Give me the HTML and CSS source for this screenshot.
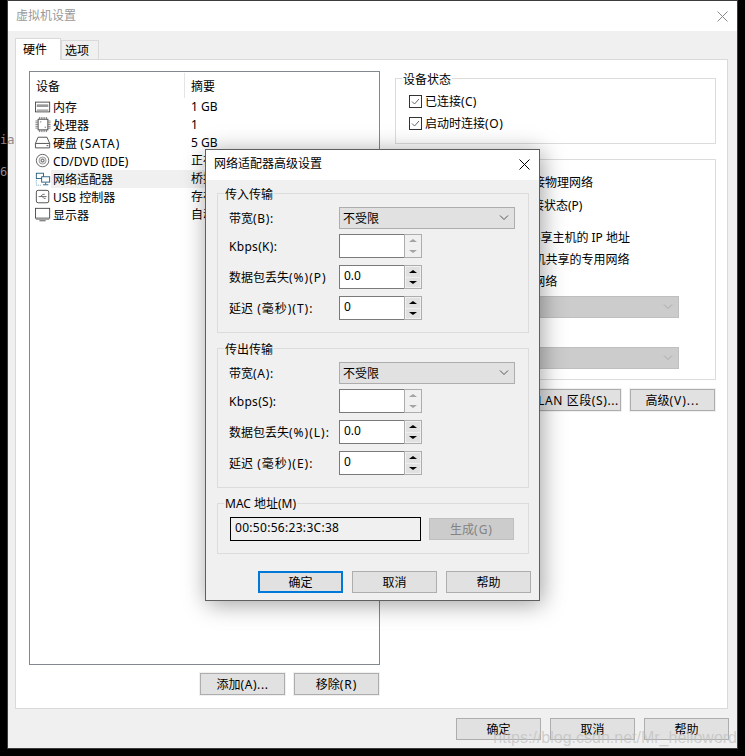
FILE: index.html
```html
<!DOCTYPE html>
<html lang="zh">
<head>
<meta charset="utf-8">
<title>虚拟机设置</title>
<link rel="stylesheet" href="styles.css">
</head>
<body>
<span class="bg-text bg-ia">ia</span>
<span class="bg-text bg-six">6</span>
<div class="window">
  <div class="titlebar">
    <span class="title-text">虚拟机设置</span>
    <svg width="11" height="11" viewBox="0 0 11 11"><path d="M.5.5l10 10M10.500.5l-10 10" stroke="#8a8a8a" fill="none"/></svg>
  </div>
  <div class="content">
    <div class="tabs">
      <div class="tab tab-active">硬件</div>
      <div class="tab">选项</div>
    </div>
    <div class="panel">
      <div class="left-col">
        <div class="list">
          <div class="list-head">
            <div class="head-a">设备</div>
            <div class="head-b">摘要</div>
          </div>
          <div class="row">
            <svg class="icon" width="18" height="18" viewBox="0 0 18 18"><rect x=".5" y="3.500" width="16" height="11" fill="#fff" stroke="#444"/><rect x="2" y="6" width="13" height="3" fill="#999"/><path d="M2 12.500h13" stroke="#666"/></svg>
            <div class="row-body"><span class="name">内存</span><span class="sum">1 GB</span></div>
          </div>
          <div class="row">
            <svg class="icon" width="18" height="18" viewBox="0 0 18 18"><rect x="3.500" y="2.500" width="11" height="12" fill="#fff" stroke="#444"/><path d="M.5 4.500h3M.5 6.500h3M.5 8.500h3M.5 10.500h3M.5 12.500h3M14 4.500h3.500M14 6.500h3.500M14 8.500h3.500M14 10.500h3.500M14 12.500h3.500M5 0v3M7 0v3M9 0v3M11 0v3M13 0v3M5 14v3M7 14v3M9 14v3M11 14v3M13 14v3" stroke="#777"/><rect x="6" y="5" width="1" height="1" fill="#222"/><rect x="11" y="11" width="1" height="1" fill="#222"/></svg>
            <div class="row-body"><span class="name">处理器</span><span class="sum">1</span></div>
          </div>
          <div class="row">
            <svg class="icon" width="18" height="18" viewBox="0 0 18 18"><path d="M3.500 2.500h10l3 7v5H.5v-5z M.5 9.500h16" fill="#fff" stroke="#444"/><path d="M13 12h2" stroke="#444"/></svg>
            <div class="row-body"><span class="name">硬盘 <span class="lat-w">(SATA)</span></span><span class="sum">5 GB</span></div>
          </div>
          <div class="row">
            <svg class="icon" width="18" height="18" viewBox="0 0 18 18"><circle cx="8.500" cy="8.500" r="7" fill="#fff" stroke="#555"/><circle cx="8.500" cy="8.500" r="4" fill="#ddd" stroke="#999"/><circle cx="8.500" cy="8.500" r="1.500" fill="#fff" stroke="#444"/></svg>
            <div class="row-body"><span class="name">CD/DVD (IDE)</span><span class="sum">正在使用文件</span></div>
          </div>
          <div class="row">
            <svg class="icon" width="18" height="18" viewBox="0 0 18 18"><rect x="1.500" y="2.500" width="8" height="6" fill="#fff" stroke="#1f5a7a"/><rect x="7.500" y="6.500" width="9" height="6" fill="#fff" stroke="#1f5a7a"/><path d="M12 13v2M9 15.500h6" stroke="#1f5a7a"/><path d="M1.500 10v6h6" stroke="#6b9ab5" stroke-dasharray="1 1" fill="none"/></svg>
            <div class="row-body row-selected"><span class="name">网络适配器</span><span class="sum">桥接模式 (自动)</span></div>
          </div>
          <div class="row">
            <svg class="icon" width="18" height="18" viewBox="0 0 18 18"><rect x="1.500" y="1.500" width="14" height="14" rx="2" fill="#fff" stroke="#444"/><path d="M4 8.500h9M6 8.500l3-2.500h2M8 8.500l2 2h2" fill="none" stroke="#666"/></svg>
            <div class="row-body"><span class="name">USB 控制器</span><span class="sum">存在</span></div>
          </div>
          <div class="row">
            <svg class="icon" width="18" height="18" viewBox="0 0 18 18"><rect x=".5" y="1.500" width="16" height="11" fill="#fff" stroke="#444"/><path d="M1 13.500h15" stroke="#999" stroke-width="2"/><path d="M5 15.500h7" stroke="#444"/></svg>
            <div class="row-body"><span class="name">显示器</span><span class="sum">自动检测</span></div>
          </div>
        </div>
        <div class="list-actions">
          <button class="btn halo" type="button">添加<span class="lat">(A)...</span></button>
          <button class="btn halo" type="button">移除<span class="lat-w">(R)</span></button>
        </div>
      </div>
      <div class="right-col">
        <div class="group group-status">
          <span class="legend legend-white">设备状态</span>
          <label class="check-row"><span class="check"><svg width="11" height="11" viewBox="0 0 11 11"><path d="M2 5.500l2.500 2.500L9 3" fill="none" stroke="#666"/></svg></span>已连接<span class="lat-s">(C)</span></label>
          <label class="check-row"><span class="check"><svg width="11" height="11" viewBox="0 0 11 11"><path d="M2 5.500l2.500 2.500L9 3" fill="none" stroke="#666"/></svg></span>启动时连接<span class="lat">(O)</span></label>
        </div>
        <div class="group group-net">
          <div class="net-row net-1">桥接模式(R): 直接连接物理网络</div>
          <div class="net-row net-2">复制物理网络连接状态(P)</div>
          <div class="net-row net-3">NAT 模式(N): 用于共享主机的 IP 地址</div>
          <div class="net-row net-4">仅主机模式(H): 与虚拟机共享的专用网络</div>
          <div class="net-row net-5">自定义(U): 特定虚拟网络</div>
          <div class="off-select off-1"><svg width="10" height="6" viewBox="0 0 10 6"><path d="M1 .5l4 4 4-4" fill="none" stroke="#a8a8a8"/></svg></div>
          <div class="off-select off-2"><svg width="10" height="6" viewBox="0 0 10 6"><path d="M1 .5l4 4 4-4" fill="none" stroke="#a8a8a8"/></svg></div>
        </div>
        <div class="net-actions">
          <button class="btn halo" type="button"><span class="lat">LAN 区段(S)...</span></button>
          <button class="btn halo" type="button">高级<span class="lat-w">(V)...</span></button>
        </div>
      </div>
    </div>
    <div class="footer">
      <button class="btn" type="button">确定</button>
      <button class="btn" type="button">取消</button>
      <button class="btn" type="button">帮助</button>
    </div>
  </div>
</div>

<div class="dialog">
  <div class="dlg-title">
    <span>网络适配器高级设置</span>
    <svg width="11" height="11" viewBox="0 0 11 11"><path d="M.5.5l10 10M10.500.5l-10 10" stroke="#000" fill="none"/></svg>
  </div>
  <div class="dlg-body">
    <div class="group dlg-group">
      <span class="legend legend-grey">传入传输</span>
      <div class="form-row form-first"><span class="form-label">带宽<span class="lat-m">(B):</span></span><div class="select"><span>不受限</span><svg width="10" height="6" viewBox="0 0 10 6"><path d="M1 .5l4 4 4-4" fill="none" stroke="#555"/></svg></div></div>
      <div class="form-row form-kbps"><span class="form-label"><span class="lat-s">Kbps(K):</span></span><div class="spin spin-off"><div class="spin-val"></div><div class="spin-btns"><div class="spin-btn"><i class="tri-up"></i></div><div class="spin-btn"><i class="tri-down"></i></div></div></div></div>
      <div class="form-row"><span class="form-label">数据包丢失<span class="lat-w">(%)(P)</span></span><div class="spin"><div class="spin-val">0.0</div><div class="spin-btns"><div class="spin-btn"><i class="tri-up"></i></div><div class="spin-btn"><i class="tri-down"></i></div></div></div></div>
      <div class="form-row"><span class="form-label">延迟<span class="lat-w"> (毫秒)(T):</span></span><div class="spin"><div class="spin-val">0</div><div class="spin-btns"><div class="spin-btn"><i class="tri-up"></i></div><div class="spin-btn"><i class="tri-down"></i></div></div></div></div>
    </div>
    <div class="group dlg-group">
      <span class="legend legend-grey">传出传输</span>
      <div class="form-row form-first"><span class="form-label">带宽<span class="lat-m">(A):</span></span><div class="select"><span>不受限</span><svg width="10" height="6" viewBox="0 0 10 6"><path d="M1 .5l4 4 4-4" fill="none" stroke="#555"/></svg></div></div>
      <div class="form-row form-kbps"><span class="form-label"><span class="lat-s">Kbps(S):</span></span><div class="spin spin-off"><div class="spin-val"></div><div class="spin-btns"><div class="spin-btn"><i class="tri-up"></i></div><div class="spin-btn"><i class="tri-down"></i></div></div></div></div>
      <div class="form-row"><span class="form-label">数据包丢失<span class="lat-w">(%)(L):</span></span><div class="spin"><div class="spin-val">0.0</div><div class="spin-btns"><div class="spin-btn"><i class="tri-up"></i></div><div class="spin-btn"><i class="tri-down"></i></div></div></div></div>
      <div class="form-row"><span class="form-label">延迟<span class="lat-w"> (毫秒)(E):</span></span><div class="spin"><div class="spin-val">0</div><div class="spin-btns"><div class="spin-btn"><i class="tri-up"></i></div><div class="spin-btn"><i class="tri-down"></i></div></div></div></div>
    </div>
    <div class="group mac-group">
      <span class="legend legend-grey legend-mac">MAC 地址(M)</span>
      <div class="mac-value">00:50:56:23:3C:38</div>
      <button class="btn btn-off" type="button">生成<span class="lat-w">(G)</span></button>
    </div>
    <div class="dlg-actions">
      <button class="btn btn-default" type="button">确定</button>
      <button class="btn" type="button">取消</button>
      <button class="btn" type="button">帮助</button>
    </div>
  </div>
</div>

<span class="watermark">https://blog.csdn.net/Mr_helloword</span>
</body>
</html>
```
FILE: styles.css
```css
* { box-sizing: border-box; }
html, body { margin: 0; padding: 0; }
body {
  position: relative;
  width: 745px;
  height: 756px;
  overflow: hidden;
  background: #000;
  color: #000;
  font: 12px/16px "Noto Sans", "Noto Sans CJK SC", sans-serif;
}
.lat-s { letter-spacing: .3px; }
.lat-m { letter-spacing: .7px; }
.lat { letter-spacing: .6px; }
.lat-w { letter-spacing: 1px; }
.bg-text { position: absolute; left: 0; color: #8a8a8a; font-family: "DejaVu Sans Mono", monospace; }
.bg-ia { top: 132px; }
.bg-six { top: 164px; }

.window {
  width: 731px;
  height: 749px;
  margin-left: 7px;
  border: 1px solid #3c3c3c;
  background: #f0f0f0;
}
.titlebar {
  height: 30px;
  background: #fff;
  display: flex;
  align-items: center;
  justify-content: space-between;
  padding: 0 9px 0 8px;
  color: #999;
}
.content { padding: 7px 9px 0 7px; }
.tabs { display: flex; align-items: flex-end; height: 21px; }
.tab {
  width: 38px;
  height: 19px;
  padding-left: 3px;
  border: 1px solid #d9d9d9;
  border-bottom: 0;
  line-height: 20px;
}
.tab-active {
  position: relative;
  z-index: 1;
  width: 46px;
  height: 22px;
  margin-bottom: -1px;
  padding-left: 7px;
  background: #fff;
  line-height: 22px;
}
.panel {
  height: 650px;
  border: 1px solid #d9d9d9;
  background: #fff;
  display: flex;
  padding: 11px 11px 0 13px;
  gap: 15px;
}
.left-col { width: 351px; }
.list {
  height: 594px;
  border: 1px solid #828790;
  background: #fff;
}
.list-head { display: flex; height: 26px; padding-top: 1px; }
.head-a {
  width: 155px;
  padding: 6px 0 0 6px;
  border-right: 1px solid #e5e5e5;
}
.head-b { padding: 6px 0 0 6px; }
.row { display: flex; height: 18px; padding-left: 5px; align-items: center; }
.icon { flex: none; width: 16px; height: 18px; overflow: visible; }
.row-body { flex: 1; display: flex; height: 18px; line-height: 18px; }
.row-selected { background: #f0f0f0; }
.name { width: 140px; padding-left: 2px; flex: none; line-height: 20px; }
.list-actions { display: flex; justify-content: flex-end; gap: 9px; margin-top: 8px; padding-right: 1px; }

.btn {
  width: 85px;
  height: 22px;
  padding: 2px 0 0;
  border: 1px solid #adadad;
  background: #e1e1e1;
  color: #000;
  font: inherit;
  flex: none;
}
.halo { box-shadow: 0 0 0 1px #f0f0f0; }

.right-col { width: 321px; padding-top: 7px; }
.group { position: relative; border: 1px solid #dcdcdc; }
.legend { position: absolute; left: 6px; top: -7px; padding: 0 1px; white-space: nowrap; }
.legend-white { background: #fff; }
.legend-grey { background: #f0f0f0; }
.legend-mac { top: -8px; }
.group-status { height: 66px; padding: 11px 0 0 13px; }
.check-row { display: flex; align-items: center; height: 22px; padding-top: 2px; }
.check {
  width: 13px;
  height: 13px;
  margin: -2px 3px 0 0;
  border: 1px solid #333;
  display: flex;
}
.group-net { height: 221px; margin-top: 15px; padding-top: 15px; }
.net-row { height: 16px; white-space: nowrap; }
.net-1 { padding-left: 32px; }
.net-2 { padding-left: 52px; margin-top: 7px; }
.net-3 { padding-left: 36px; margin-top: 16px; }
.net-4 { padding-left: 19px; margin-top: 6px; }
.net-5 { padding-left: 31px; margin-top: 6px; }
.off-select {
  height: 22px;
  margin-left: 33px;
  width: 250px;
  background: #ccc;
  border: 1px solid #bfbfbf;
  display: flex;
  align-items: center;
  justify-content: flex-end;
  padding-right: 5px;
}
.off-1 { margin-top: 6px; }
.off-2 { margin-top: 29px; }
.net-actions { display: flex; justify-content: flex-end; gap: 9px; margin-top: 9px; padding-right: 1px; }

.footer { display: flex; justify-content: flex-end; gap: 9px; margin: 9px -1px 0 0; }

.dialog {
  position: absolute;
  left: 205px;
  top: 149px;
  width: 335px;
  height: 452px;
  border: 1px solid #5f5f5f;
  background: #f0f0f0;
  box-shadow: 2px 3px 22px rgba(0, 0, 0, .38);
}
.dlg-title {
  height: 30px;
  background: #fff;
  display: flex;
  align-items: center;
  justify-content: space-between;
  padding: 0 9px 2px 8px;
}
.dlg-body { padding: 13px 10px 0 11px; }
.dlg-group { height: 140px; margin-bottom: 15px; padding: 0 0 0 11px; }
.form-row { display: flex; align-items: center; margin-top: 7px; }
.form-first { margin-top: 13px; }
.form-kbps { margin-top: 5px; }
.form-label { width: 110px; flex: none; white-space: nowrap; padding-top: 2px; }
.select {
  width: 176px;
  height: 22px;
  border: 1px solid #adadad;
  background: #e1e1e1;
  display: flex;
  align-items: center;
  justify-content: space-between;
  padding: 2px 5px 0 3px;
}
.select svg { margin-top: -2px; }
.spin { display: flex; width: 83px; height: 24px; }
.spin-val {
  flex: 1;
  background: #fff;
  border: 1px solid #7a7a7a;
  border-right: 0;
  padding: 2px 0 0 4px;
}
.spin-btns {
  width: 18px;
  border: 1px solid #adadad;
  padding: 1px;
  display: flex;
  flex-direction: column;
  gap: 1px;
}
.spin-btn { flex: 1; background: #e1e1e1; display: flex; align-items: center; justify-content: center; }
.tri-up, .tri-down { width: 0; height: 0; border-left: 4px solid transparent; border-right: 4px solid transparent; }
.tri-up { border-bottom: 3px solid #000; }
.tri-down { border-top: 3px solid #000; }
.spin-off .spin-btn { background: #f0f0f0; }
.spin-off .tri-up { border-bottom-color: #a3a3a3; }
.spin-off .tri-down { border-top-color: #a3a3a3; }

.mac-group { height: 51px; display: flex; align-items: flex-start; gap: 8px; padding: 13px 0 0 12px; }
.mac-value {
  width: 191px;
  height: 24px;
  border: 1px solid #000;
  padding: 2px 0 0 4px;
  letter-spacing: .3px;
}
.btn-off { margin-top: 1px; background: #ccc; border-color: #bfbfbf; color: #838383; }
.dlg-actions { display: flex; justify-content: flex-end; gap: 9px; margin: 17px -2px 0 0; }
.btn-default { border: 2px solid #0078d7; padding-top: 1px; }

.watermark {
  position: absolute;
  right: 8px;
  top: 729px;
  color: rgba(190, 190, 190, .7);
  font: 16px/18px "Liberation Sans", sans-serif;
  white-space: nowrap;
}
```
